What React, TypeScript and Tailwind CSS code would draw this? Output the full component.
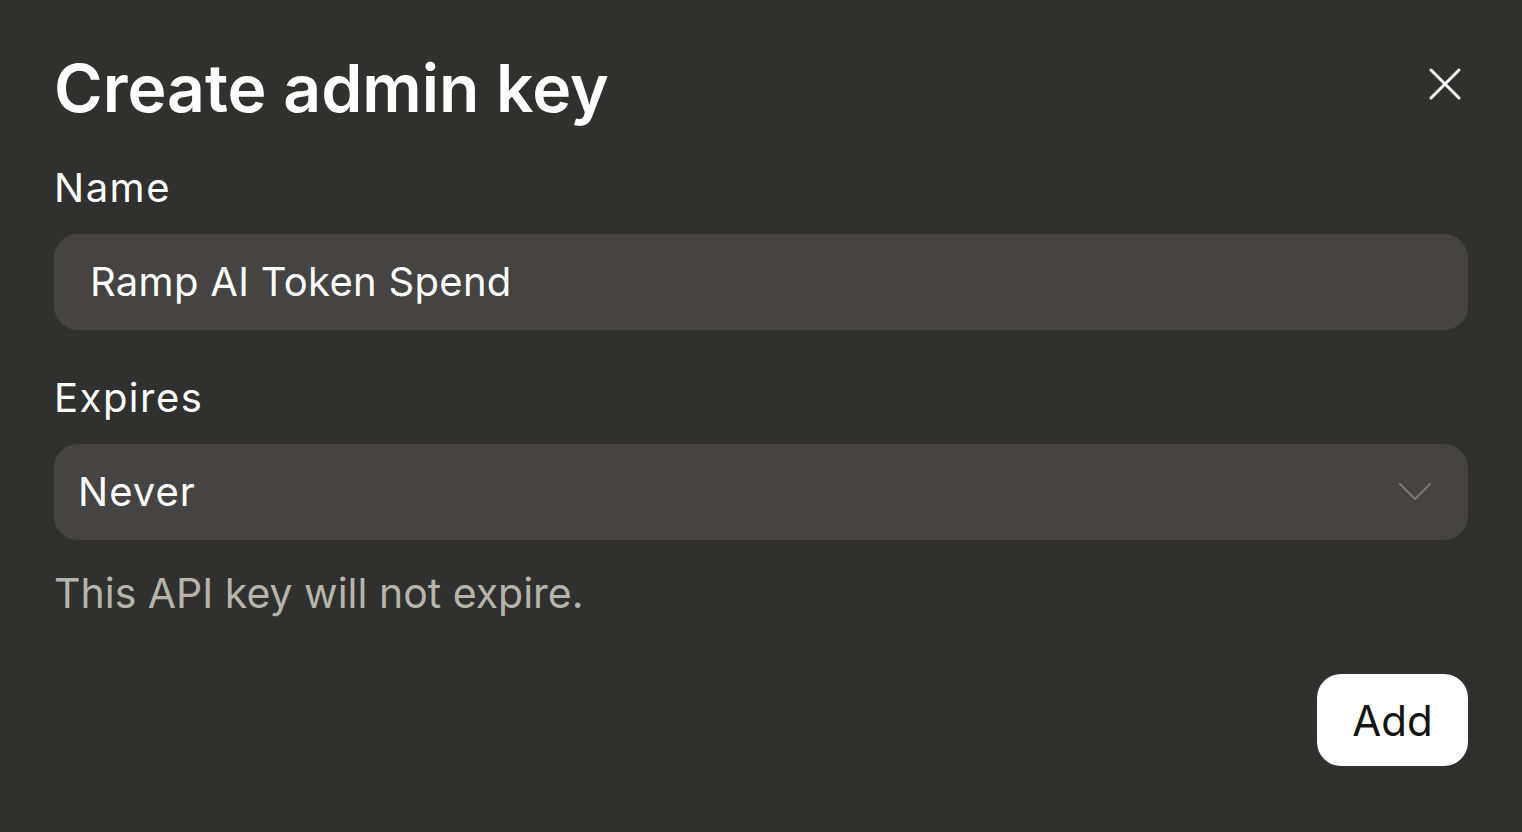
const CloseIcon = () => (
  <svg width="32" height="32" viewBox="0 0 32 32" fill="none" stroke="currentColor" strokeWidth="3" strokeLinecap="round">
    <line x1="2" y1="2" x2="30" y2="30" />
    <line x1="30" y1="2" x2="2" y2="30" />
  </svg>
);

const Chevron = () => (
  <svg width="32" height="18" viewBox="0 0 32 18" fill="none" stroke="currentColor" strokeWidth="2.2" strokeLinecap="round" strokeLinejoin="round">
    <polyline points="1,1 16,16 31,1" />
  </svg>
);

const App = () => {
  return (
    <div
      className="min-h-screen w-full bg-[#30302e] text-white px-[54px] pt-[48px]"
      style={{ fontFamily: "Inter, 'Noto Sans', sans-serif" }}
    >
      {/* Header */}
      <div className="flex items-start justify-between">
        <h1 className="text-[66px] font-semibold leading-[80px]">
          Create admin key
        </h1>
        <button className="mt-[20px] mr-[7px] text-white">
          <CloseIcon />
        </button>
      </div>

      {/* Name */}
      <label className="block mt-[36px] text-[40px] leading-[48px] tracking-[1.5px]">Name</label>
      <div className="mt-[22px] h-[96px] rounded-[24px] bg-[#454442] flex items-center pl-[36px]">
        <span className="text-[40px] tracking-[0.3px]">Ramp AI Token Spend</span>
      </div>

      {/* Expires */}
      <label className="block mt-[44px] text-[40px] leading-[48px] tracking-[1.5px]">Expires</label>
      <div className="mt-[22px] h-[96px] rounded-[24px] bg-[#454442] flex items-center justify-between pl-[24px] pr-[37px]">
        <span className="text-[40px] tracking-[1px]">Never</span>
        <span className="text-[#77766f]">
          <Chevron />
        </span>
      </div>
      <p className="mt-[27px] text-[41px] leading-[52px] text-[#b7b5aa]">
        This API key will not expire.
      </p>

      {/* Footer */}
      <div className="flex justify-end mt-[55px]">
        <button className="h-[92px] w-[151px] rounded-[24px] bg-white text-[#141413] text-[42px]">
          Add
        </button>
      </div>
    </div>
  );
};

export default App;
